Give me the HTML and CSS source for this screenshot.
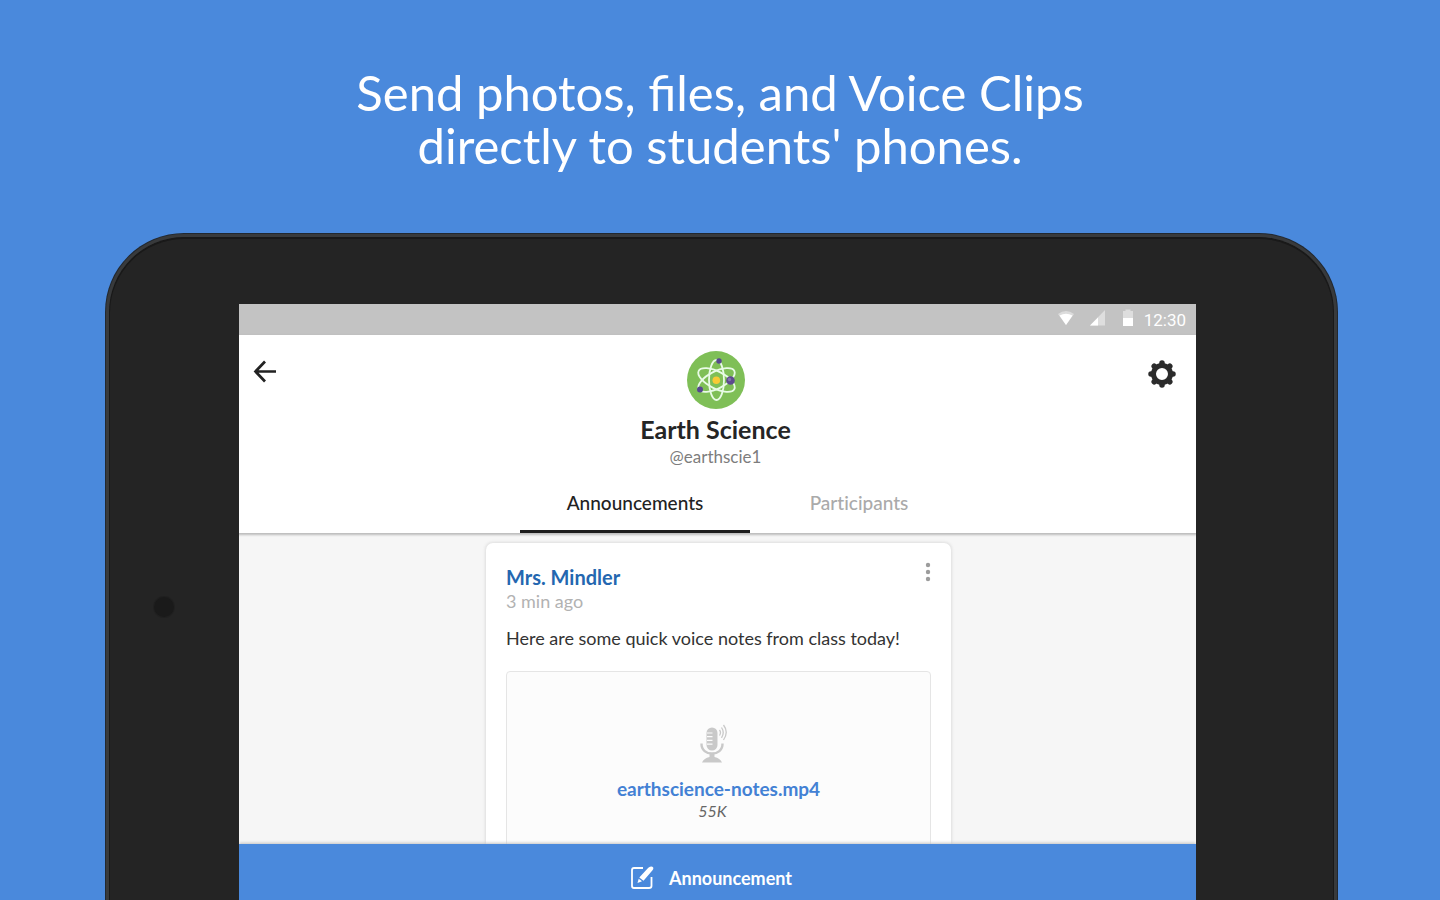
FILE: index.html
```html
<!DOCTYPE html>
<html lang="en">
<head>
<meta charset="utf-8">
<title>Earth Science</title>
<link rel="stylesheet" href="styles.css">
</head>
<body class="promo">
<h1 class="headline">Send photos, files, and Voice Clips<br>directly to students' phones.</h1>
<main class="tablet">
  <div class="bezel"><span class="camera"></span></div>
  <section class="screen">
    <div class="status">
      <svg class="status-icon" width="18" height="16" viewBox="0 0 18 16"><path d="M1 4Q9-2 17 4L9 15Z" fill="#dcdcdc"/><path d="M2.500 5.500Q9 2 15.500 5.500L9 15Z" fill="#fff"/></svg>
      <svg class="status-icon" width="17" height="16" viewBox="0 0 17 16"><path d="M16 0V15.500H1Z" fill="#dedede"/><path d="M9 7.500V15.500H1Z" fill="#fff"/></svg>
      <svg class="status-icon" width="12" height="18" viewBox="0 0 12 18"><path d="M1 2H3.500V.5H8.500V2H11V10H1Z" fill="#dedede"/><path d="M1 9H11V17H1Z" fill="#fff"/></svg>
      <span class="clock">12:30</span>
    </div>
    <header class="header">
      <button class="icon-button back" aria-label="Back"><svg width="24" height="24" viewBox="0 0 24 24"><path d="M12 1.500 2.500 11.500 12 21.500M2.500 11.500H23" fill="none" stroke="#222" stroke-width="2.700"/></svg></button>
      <div class="class-info">
        <svg class="avatar" width="58" height="58" viewBox="0 0 58 58">
          <circle cx="29" cy="29" r="29" fill="#7fbf57"/>
          <g fill="none" stroke="#e8fbe6" stroke-width="1.800">
            <ellipse cx="29.500" cy="29" rx="20" ry="8.500" transform="rotate(27 29.500 29)"/>
            <ellipse cx="29.500" cy="29" rx="20" ry="8.500" transform="rotate(-27 29.500 29)"/>
            <ellipse cx="29.500" cy="29" rx="7.500" ry="20"/>
          </g>
          <circle cx="29.300" cy="29.300" r="3.800" fill="#f8ca35"/>
          <circle cx="32" cy="10" r="2.700" fill="#57488f"/>
          <circle cx="43.500" cy="29.500" r="4.300" fill="#5d4b8f"/><circle cx="42.500" cy="28.500" r="1.700" fill="#8372ae"/>
          <circle cx="13" cy="38.500" r="3" fill="#57488f"/>
        </svg>
        <h2 class="class-name">Earth Science</h2>
        <p class="handle">@earthscie1</p>
      </div>
      <button class="icon-button settings" aria-label="Settings"><svg width="28" height="28" viewBox="0 0 28 28"><circle cx="14" cy="14" r="8.500" fill="none" stroke="#2b2b2b" stroke-width="5"/><g stroke="#2b2b2b" stroke-width="5.500" stroke-linecap="round"><path d="M14 3V4M14 24V25M3 14H4M24 14H25M6.200 6.200 7 7M21 21 21.800 21.800M21.800 6.200 21 7M7 21 6.200 21.800"/></g></svg></button>
      <nav class="tabs">
        <button class="tab tab-active">Announcements</button>
        <button class="tab">Participants</button>
      </nav>
    </header>
    <div class="feed">
      <article class="card">
        <div class="card-head">
          <div>
            <h3 class="author">Mrs. Mindler</h3>
            <p class="time">3 min ago</p>
          </div>
          <button class="icon-button more" aria-label="More options"><svg width="6" height="20" viewBox="0 0 6 20" fill="#9c9c9c"><circle cx="3" cy="3" r="2.200"/><circle cx="3" cy="10" r="2.200"/><circle cx="3" cy="17" r="2.200"/></svg></button>
        </div>
        <p class="message">Here are some quick voice notes from class today!</p>
        <div class="attachment">
          <svg class="mic" width="28" height="40" viewBox="0 0 28 40">
            <rect x="6.500" y="3.500" width="11" height="23" rx="5.500" fill="#c9c9c9"/>
            <path d="M7 9H12.500M7 12.700H12.500M7 16.400H12.500M7 20.100H12.500" stroke="#fcfcfc" stroke-width="1.200"/>
            <path d="M1.500 19.500C1 33 23 33 22.500 19.500" fill="none" stroke="#c9c9c9" stroke-width="2.400"/>
            <path d="M9.500 28.500H14.500V33Q20 34 22 38.500H2Q4 34 9.500 33Z" fill="#c9c9c9"/>
            <path d="M19.500 6Q21.500 8.500 19.500 11.500M21.500 3.500Q25 8.500 21.500 13.800M23.500 1Q29 8 23.500 16" fill="none" stroke="#c9c9c9" stroke-width="1.300"/>
          </svg>
          <a class="file" href="#">earthscience-notes.mp4</a>
          <p class="size">55K</p>
        </div>
      </article>
    </div>
    <button class="compose">
      <svg width="23" height="23" viewBox="0 0 23 23"><path d="M12 2H3Q1 2 1 4V20Q1 22 3 22H18Q20.500 22 20.500 20V11" fill="none" stroke="#fff" stroke-width="1.800"/><path d="M17.300 1.700 19 .8Q21-.3 22.200 1.500 22.700 3 21.500 4.200L12.500 14.700 8.300 11.500Z" fill="#fff"/><path d="M7.700 12.700 11 15.300 6.500 17Z" fill="#fff"/></svg>
      Announcement
    </button>
  </section>
</main>
</body>
</html>
```
FILE: styles.css
```css
* { box-sizing: border-box; }
h1, h2, h3, p { margin: 0; font-weight: 400; }
button { font: inherit; border: 0; background: none; padding: 0; cursor: pointer; }
svg { display: block; flex: none; }

.promo {
  margin: 0;
  height: 100vh;
  overflow: hidden;
  display: flex;
  flex-direction: column;
  background: #4a89dc;
  color: #252525;
  font-family: Lato, sans-serif;
}
.headline {
  padding: 66px 20px 62px;
  color: #fff;
  font-size: 49px;
  line-height: 53px;
  text-align: center;
}
.tablet {
  flex: 1;
  min-height: 0;
  display: flex;
  margin: 0 103px 0 106px;
  padding: 67px 138px 0 0;
  background: #242424;
  border: 3px solid #383a3c;
  border-bottom: 0;
  border-radius: 78px 78px 0 0;
  box-shadow: inset 0 1px 0 1px #191919, 0 0 0 1px #22282f;
}
.bezel { width: 130px; flex: none; padding: 293px 0 0 45px; }
.camera {
  display: block;
  width: 20px;
  height: 20px;
  border-radius: 50%;
  background: #1a1a1a;
  box-shadow: 0 0 0 1px #202020;
}
.screen {
  flex: 1;
  min-width: 0;
  overflow: hidden;
  display: flex;
  flex-direction: column;
  background: #f6f6f6;
}
.status {
  flex: none;
  display: flex;
  justify-content: flex-end;
  align-items: center;
  height: 31px;
  padding-right: 10px;
  background: #c3c3c3;
}
.status-icon { margin: 0 14px 3px 0; }
.status-icon:nth-child(2) { margin-right: 16px; }
.status-icon:nth-child(3) { margin-right: 10px; }
.clock {
  padding-top: 1px;
  color: #fff;
  font: 17px/20px Roboto, sans-serif;
}
.header {
  position: relative;
  flex: none;
  display: grid;
  grid-template-columns: 48px 1fr 52px;
  align-items: start;
  background: #fff;
  box-shadow: 0 1px 2px 1px #bcbcbc;
}
.icon-button { display: flex; justify-content: center; }
.back { margin: 25px 0 0 4px; }
.settings { margin: 25px 20px 0 0; justify-content: flex-end; }
.class-info {
  display: flex;
  flex-direction: column;
  align-items: center;
  padding-top: 16px;
}
.class-name { margin-top: 5px; font-size: 25px; line-height: 30px; font-weight: 700; }
.handle { margin-top: 1px; color: #7d7d7d; font-size: 17px; line-height: 24px; }
.tabs {
  grid-column: 1 / -1;
  display: flex;
  justify-content: center;
  padding: 10px 0 0 53px;
}
.tab {
  width: 218px;
  height: 54px;
  padding-bottom: 4px;
  color: #aaa;
  font-size: 19px;
  font-weight: 500;
  font-variant-ligatures: none;
  border-bottom: 3px solid transparent;
}
.tab-active { width: 230px; color: #222; border-color: #1c1c1c; }
.feed {
  flex: 1;
  min-height: 0;
  overflow: hidden;
  padding: 10px 19px 0 21px;
}
.card {
  max-width: 465px;
  min-height: 400px;
  margin: 0 auto;
  padding: 21px 20px 20px;
  background: #fff;
  border-radius: 7px;
  box-shadow: 0 0 3px 1px #dedede;
}
.card-head { display: flex; justify-content: space-between; align-items: flex-start; }
.author { color: #2467b0; font-size: 20px; line-height: 26px; font-weight: 700; }
.time { color: #b2b2b2; font-size: 18px; line-height: 22px; }
.more { margin-top: -2px; }
.message { margin-top: 14px; color: #333; font-size: 18px; line-height: 24px; }
.attachment {
  display: flex;
  flex-direction: column;
  align-items: center;
  margin-top: 21px;
  padding: 52px 0 50px;
  background: #fcfcfc;
  border: 1px solid #e5e5e5;
  border-radius: 4px;
}
.mic { margin-right: 10px; }
.file { margin-top: 13px; color: #4381d4; font-size: 19px; line-height: 24px; font-weight: 700; text-decoration: none; }
.size { margin-right: 12px; color: #666; font-size: 16px; line-height: 20px; font-style: italic; }
.compose {
  position: relative;
  flex: none;
  display: flex;
  justify-content: center;
  align-items: center;
  gap: 15px;
  height: 56px;
  padding: 11px 12px 0 0;
  background: #4a89dc;
  color: #fff;
  font-size: 18px;
  font-weight: 700;
  box-shadow: 0 -1px 3px #c2c2c2;
}
```
